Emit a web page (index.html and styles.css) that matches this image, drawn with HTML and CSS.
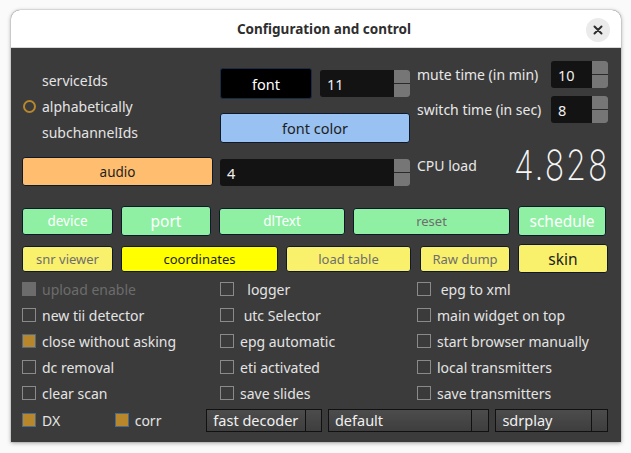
FILE: index.html
```html
<!DOCTYPE html>
<html>
<head>
<meta charset="utf-8">
<link rel="stylesheet" href="styles.css">
</head>
<body>
<div class="window">
  <div class="titlebar">
    <span class="title">Configuration and control</span>
    <span class="close">
      <svg width="10" height="10" viewBox="0 0 10 10"><path d="M1.5 1.5 L8.5 8.5 M8.5 1.5 L1.5 8.5" stroke="#2e2e2e" stroke-width="2" stroke-linecap="round"/></svg>
    </span>
  </div>
  <div class="content">
    <div class="top">
      <div class="colA">
        <div class="radio"><span class="rlabel">serviceIds</span></div>
        <div class="radio"><span class="rdot"></span><span class="rlabel">alphabetically</span></div>
        <div class="radio"><span class="rlabel">subchannelIds</span></div>
        <div class="btn orange audio">audio</div>
      </div>
      <div class="colB">
        <div class="fontrow">
          <div class="btn black fontbtn">font</div>
          <div class="spin w90"><span class="val">11</span><span class="step"><i></i><i></i></span></div>
        </div>
        <div class="btn blue fontcolor">font color</div>
        <div class="spin wfull"><span class="val">4</span><span class="step"><i></i><i></i></span></div>
      </div>
      <div class="colC">
        <div class="labrow first">
          <span>mute time (in min)</span>
          <div class="spin w57"><span class="val">10</span><span class="step"><i></i><i></i></span></div>
        </div>
        <div class="labrow">
          <span>switch time (in sec)</span>
          <div class="spin w57"><span class="val">8</span><span class="step"><i></i><i></i></span></div>
        </div>
        <div class="cpurow">
          <span>CPU load</span>
          <span class="lcd">4.828</span>
        </div>
      </div>
    </div>

    <div class="btnrow r1">
      <div class="btn green b-device wtext">device</div>
      <div class="btn green b-port wtext big">port</div>
      <div class="btn green b-dl wtext">dlText</div>
      <div class="btn green b-reset gtext">reset</div>
      <div class="btn green b-sched wtext big">schedule</div>
    </div>
    <div class="btnrow r2">
      <div class="btn yellow b-snr gtext">snr viewer</div>
      <div class="btn brightyellow b-coord">coordinates</div>
      <div class="btn yellow b-load gtext">load table</div>
      <div class="btn yellow b-raw gtext">Raw dump</div>
      <div class="btn yellow b-skin big">skin</div>
    </div>

    <div class="checks">
      <div class="cb disabled"><span class="box"></span><span>upload enable</span></div>
      <div class="cb"><span class="box"></span><span>&nbsp;&nbsp;logger</span></div>
      <div class="cb"><span class="box"></span><span>&nbsp;epg to xml</span></div>

      <div class="cb"><span class="box"></span><span>new tii detector</span></div>
      <div class="cb"><span class="box"></span><span>&nbsp;utc Selector</span></div>
      <div class="cb"><span class="box"></span><span>main widget on top</span></div>

      <div class="cb"><span class="box on"></span><span>close without asking</span></div>
      <div class="cb"><span class="box"></span><span>epg automatic</span></div>
      <div class="cb"><span class="box"></span><span>start browser manually</span></div>

      <div class="cb"><span class="box"></span><span>dc removal</span></div>
      <div class="cb"><span class="box"></span><span>eti activated</span></div>
      <div class="cb"><span class="box"></span><span>local transmitters</span></div>

      <div class="cb"><span class="box"></span><span>clear scan</span></div>
      <div class="cb"><span class="box"></span><span>save slides</span></div>
      <div class="cb"><span class="box"></span><span>save transmitters</span></div>
    </div>

    <div class="bottom">
      <div class="cb dx"><span class="box on"></span><span>DX</span></div>
      <div class="cb corr"><span class="box on"></span><span>corr</span></div>
      <div class="combo c1"><span>fast decoder</span><i></i></div>
      <div class="combo c2"><span>default</span><i></i></div>
      <div class="combo c3"><span>sdrplay</span><i></i></div>
    </div>
  </div>
</div>
</body>
</html>
```

FILE: styles.css
```css
* { box-sizing: border-box; }
html, body { margin: 0; padding: 0; }
body {
  background: #fafafa;
  width: 631px;
  height: 453px;
  overflow: hidden;
  font-family: "Noto Sans", "Open Sans", sans-serif;
  font-size: 14px;
  color: #e8e8e8;
}
.window {
  margin: 10px 0 0 11px;
  width: 610px;
  height: 432px;
  border-radius: 9px 9px 0 0;
  box-shadow: 0 1px 4px rgba(0,0,0,0.35), 0 0 0 1px rgba(0,0,0,0.06);
  overflow: hidden;
  background: #3b3b3b;
}
.titlebar {
  height: 38px;
  background: #ffffff;
  border-bottom: 1px solid #d8d8d8;
  display: flex;
  align-items: center;
  justify-content: center;
  position: relative;
}
.title {
  font-weight: bold;
  font-size: 13.5px;
  color: #2e2e2e;
  margin-left: 16px;
}
.close {
  position: absolute;
  right: 11px;
  top: 8px;
  width: 24px;
  height: 24px;
  border-radius: 50%;
  background: #ebebeb;
  display: flex;
  align-items: center;
  justify-content: center;
}
.content {
  padding: 0 13px 0 11px;
}
.top {
  display: flex;
  gap: 7px;
  height: 139px;
}
.colA { width: 191px; padding-top: 19px; }
.colB { width: 190px; padding-top: 20px; }
.colC { width: 191px; padding-top: 13px; }

.radio {
  height: 26px;
  display: flex;
  align-items: center;
  position: relative;
  padding-left: 20px;
  color: #e4e4e4;
}
.rdot {
  position: absolute;
  left: 1px;
  top: 7px;
  width: 13px;
  height: 13px;
  border-radius: 50%;
  border: 2px solid #b8862b;
}
.btn {
  display: flex;
  align-items: center;
  justify-content: center;
  border: 1px solid #0e1a2c;
  border-radius: 3px;
  color: #1e1e1e;
  font-size: 13.5px;
}
.orange { background: #ffbe6f; }
.blue { background: #99c1f1; }
.black { background: #000; color: #fff; border-color: #1a2b48; }
.green { background: #8ff0a4; }
.yellow { background: #f9f06b; }
.brightyellow { background: #ffff00; }
.wtext { color: #ffffff; }
.gtext { color: #6e6e6e; font-size: 13px; }
.big { font-size: 15.5px; }

.audio { margin-top: 12px; height: 29px; width: 191px; }

.fontrow { display: flex; align-items: center; gap: 8px; height: 31px; }
.fontbtn { width: 92px; height: 31px; font-size: 14.5px; }
.fontcolor { margin-top: 14px; height: 30px; width: 190px; font-size: 14.5px; }

.spin {
  height: 27px;
  background: #131313;
  border-radius: 3px;
  display: flex;
  overflow: hidden;
  flex-shrink: 0;
}
.spin .val {
  flex: 1;
  display: flex;
  align-items: center;
  padding-left: 7px;
  font-size: 14.5px;
  color: #f0f0f0;
}
.spin .step {
  width: 16px;
  display: flex;
  flex-direction: column;
  gap: 1px;
  background: #2a2a2a;
}
.spin .step i {
  flex: 1;
  background: #767676;
}
.w90 { width: 90px; }
.w57 { width: 57px; }
.wfull { width: 190px; margin-top: 16px; }

.labrow {
  display: flex;
  align-items: center;
  justify-content: space-between;
  height: 27px;
  font-size: 14px;
}
.labrow + .labrow { margin-top: 8px; }
.cpurow {
  margin-top: 23px;
  height: 38px;
  display: flex;
  align-items: center;
  justify-content: space-between;
  font-size: 14px;
}
.lcd {
  font-family: "Inter", "DejaVu Sans", sans-serif;
  font-weight: 200;
  font-size: 34px;
  letter-spacing: 2px;
  color: #f6f6f6;
  transform: scale(0.95, 1.22);
  transform-origin: right center;
  margin-right: -1px;
  margin-top: -2px;
}

.btnrow {
  display: flex;
  align-items: center;
  gap: 8px;
}
.r1 { height: 30px; margin-top: 19px; }
.r2 { height: 29px; margin-top: 8px; }
.r1 .btn { height: 27px; }
.r1 .b-port, .r1 .b-sched { height: 30px; }
.b-device { width: 91px; }
.b-port { width: 90px; }
.b-dl { width: 126px; }
.b-reset { width: 157px; }
.b-sched { width: 88px; }
.r2 .btn { height: 26px; }
.r2 .b-skin { height: 29px; }
.b-snr { width: 91px; }
.b-coord { width: 157px; font-size: 13px; }
.b-load { width: 125px; }
.b-raw { width: 90px; margin-left: 1px; }
.b-skin { width: 90px; }

.checks {
  margin-top: 3px;
  display: grid;
  grid-template-columns: 198px 197px 1fr;
  grid-auto-rows: 26px;
}
.cb {
  display: flex;
  align-items: center;
  gap: 6px;
  color: #e4e4e4;
  white-space: nowrap;
  font-size: 14px;
}
.box {
  width: 14px;
  height: 14px;
  border: 1px solid #8a8a8a;
  background: #3b3b3b;
  flex-shrink: 0;
}
.box.on {
  background: #b8862b;
  border-color: #4c6a8c;
}
.cb.disabled { color: #6c6c6c; }
.cb.disabled .box { background: #6c6c6c; border-color: #6c6c6c; }

.bottom {
  height: 26px;
  margin-top: 1px;
  display: flex;
  align-items: center;
}
.dx { width: 93px; }
.corr { width: 92px; }
.combo {
  height: 23px;
  border: 1px solid #111;
  background: linear-gradient(#4c4c4c, #3e3e3e);
  display: flex;
  align-items: center;
  color: #f0f0f0;
  font-size: 14.5px;
}
.combo span { flex: 1; padding-left: 6px; }
.combo i {
  width: 16px;
  height: 100%;
  border-left: 1px solid #111;
}
.c1 { width: 116px; }
.c2 { width: 162px; margin-left: 6px; }
.c3 { width: 113px; margin-left: 6px; }
.c2 i { width: 17px; }
```
